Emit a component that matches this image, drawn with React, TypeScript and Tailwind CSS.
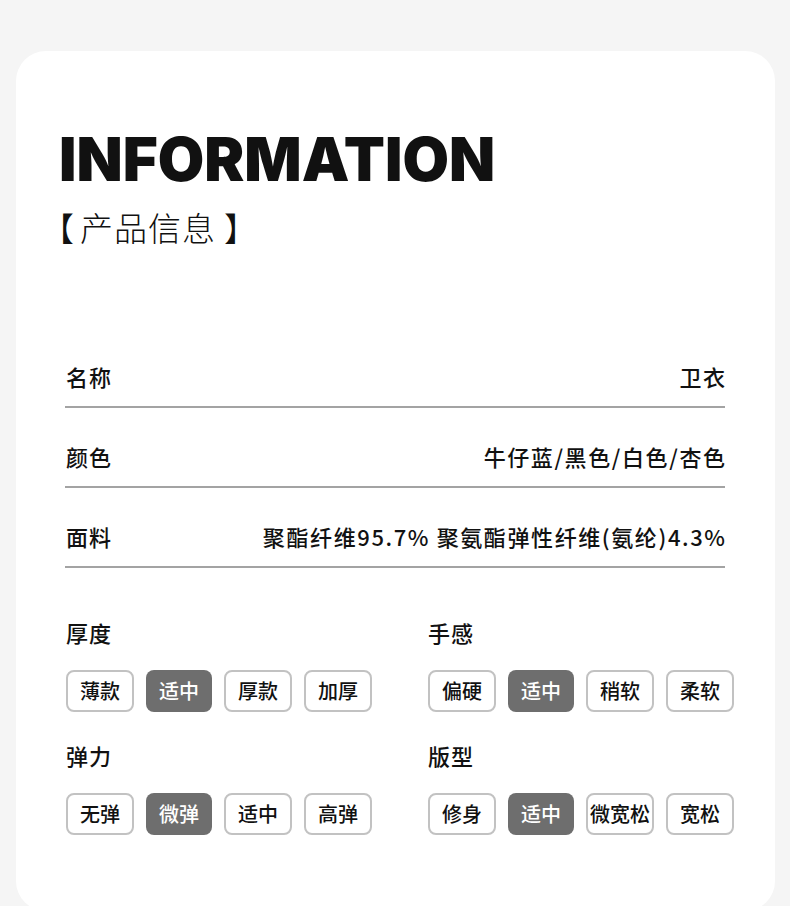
const rows = [
  { label: "名称", value: "卫衣" },
  { label: "颜色", value: "牛仔蓝/黑色/白色/杏色" },
  { label: "面料", value: "聚酯纤维95.7% 聚氨酯弹性纤维(氨纶)4.3%" },
];

const attrs = [
  { label: "厚度", options: ["薄款", "适中", "厚款", "加厚"], active: 1 },
  { label: "手感", options: ["偏硬", "适中", "稍软", "柔软"], active: 1 },
  { label: "弹力", options: ["无弹", "微弹", "适中", "高弹"], active: 1 },
  { label: "版型", options: ["修身", "适中", "微宽松", "宽松"], active: 1 },
];

export default function App() {
  return (
    <div className="min-h-screen bg-[#f5f5f5] pt-[51px] pl-[16px] pr-[15px] font-['Noto_Sans_CJK_SC',sans-serif] text-[#111]">
      <div className="bg-white rounded-[30px] h-[860px] pt-[78px] px-[43px]">
        <h1 className="font-['Inter','Noto_Sans_CJK_SC',sans-serif] text-[60px] font-black leading-none">
          INFORMATION
        </h1>
        <p className="mt-[22px] flex text-[33px] font-light leading-none">
          <span className="-ml-[18px]">【</span>
          <span className="ml-[6px] tracking-[1px]">产品信息</span>
          <span className="ml-[8px]">】</span>
        </p>

        <div className="mt-[84px] ml-[6px] mr-[7px]">
          {rows.map((r) => (
            <div
              key={r.label}
              className="flex justify-between items-center pt-[37px] pb-[19px] border-b-2 border-[#a3a3a3] text-[22px] leading-none font-medium"
            >
              <span className="pl-[1px] tracking-[1px]">{r.label}</span>
              <span className="tracking-[1.6px] -mr-[1.6px]">{r.value}</span>
            </div>
          ))}
        </div>

        <div className="mt-[53px] ml-[7px] grid grid-cols-[362px_1fr] gap-y-[32px]">
          {attrs.map((a) => (
            <div key={a.label}>
              <div className="text-[22px] leading-none font-medium tracking-[1px]">{a.label}</div>
              <div className="mt-[27px] flex gap-[12px]">
                {a.options.map((o, i) =>
                  i === a.active ? (
                    <div
                      key={o}
                      className="w-[66px] h-[42px] rounded-[8px] bg-[#6e6e6e] text-white flex items-center justify-center text-[20px] font-medium"
                    >
                      {o}
                    </div>
                  ) : (
                    <div
                      key={o}
                      className="w-[68px] h-[42px] rounded-[8px] border-2 border-[#c2c2c2] flex items-center justify-center text-[20px] font-medium"
                    >
                      {o}
                    </div>
                  )
                )}
              </div>
            </div>
          ))}
        </div>
      </div>
    </div>
  );
}
